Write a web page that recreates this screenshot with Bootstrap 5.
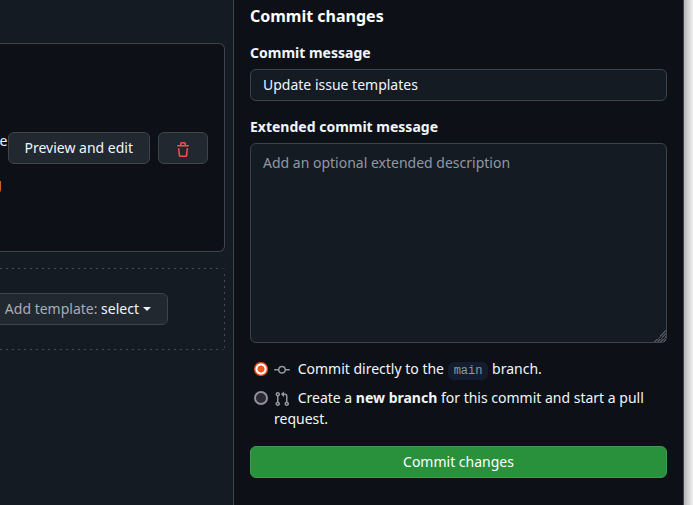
<!DOCTYPE html>
<html lang="en" data-bs-theme="dark">
<head>
<meta charset="utf-8">
<meta name="viewport" content="width=device-width, initial-scale=1">
<title>Commit changes</title>
<link rel="stylesheet" href="https://cdn.jsdelivr.net/npm/bootstrap@5.3.0/dist/css/bootstrap.min.css">
<style>
  body { font-family: "Noto Sans", sans-serif; font-size: 14px; line-height: 21px; color: #f0f6fc; background: #151b23; }
  .layout { display: grid; grid-template-columns: minmax(0, 1fr) minmax(0, 451px) 9px; }
  .templates { padding: 43px 8px 0 0; gap: 16px; }
  .template-box { height: 209px; padding-right: 16px; background: #0d1117; border: 1px solid #3d444d; border-left: 0; border-radius: 0 6px 6px 0; }
  .template-info { gap: 22px; padding-top: 28px; }
  .template-note { color: #ffb757; padding-right: 6px; }
  .add-box {
    height: 82px; padding-right: 57px; border-radius: 0 4px 4px 0;
    background:
      repeating-linear-gradient(90deg, #444b55 0 2px, transparent 2px 6px) top / 100% 1px no-repeat,
      repeating-linear-gradient(90deg, #444b55 0 2px, transparent 2px 6px) bottom / 100% 1px no-repeat,
      repeating-linear-gradient(180deg, #444b55 0 2px, transparent 2px 6px) right / 1px 100% no-repeat;
  }
  .btn { --bs-btn-font-size: 14px; --bs-btn-line-height: 20px; --bs-btn-border-radius: 6px; --bs-btn-padding-y: 5px; --bs-btn-padding-x: 16px; white-space: nowrap; }
  .btn-tool { --bs-btn-color: #f0f6fc; --bs-btn-bg: #212830; --bs-btn-border-color: #3d444d; --bs-btn-hover-color: #f0f6fc; --bs-btn-hover-bg: #262c36; --bs-btn-hover-border-color: #3d444d; }
  .btn-trash { width: 50px; height: 32px; padding-top: 9px; padding-bottom: 5px; color: #fa5049; }
  .btn-commit { --bs-btn-color: #fff; --bs-btn-bg: #29903b; --bs-btn-border-color: #3e9b4f; --bs-btn-hover-color: #fff; --bs-btn-hover-bg: #2e9a40; --bs-btn-hover-border-color: #3e9b4f; }
  .soft { color: #a5adb6; }
  .caret { border: 4px solid transparent; border-top-color: currentColor; border-bottom: 0; }
  .commit-panel { padding: 4px 16px 27px; background: #0d1117; border: solid #3d444d; border-width: 0 1px; }
  .commit-panel h1 { font-size: 16px; line-height: 24px; font-weight: 700; margin-bottom: 14px; }
  .form-label { font-weight: 700; margin-bottom: 6px; }
  .form-control { font-size: 14px; line-height: 20px; padding: 5px 12px; margin-bottom: 15px; color: #f0f6fc; background: #151b23; border-color: #3d444d; border-radius: 6px; }
  textarea.form-control { height: 200px; padding-top: 9px; }
  textarea::-webkit-resizer { background: linear-gradient(135deg, transparent 60%, #4b525b 60% 64%, transparent 64% 70%, #4b525b 70% 74%, transparent 74% 80%, #4b525b 80% 84%, transparent 84% 90%, #4b525b 90% 94%, transparent 94%); }
  .form-control::placeholder { color: #9198a1; }
  .choice { display: grid; grid-template-columns: 16px minmax(0, 1fr); column-gap: 8px; margin-bottom: 7px; }
  .choice-last { margin-bottom: 17px; }
  .choice input { appearance: none; width: 14px; height: 14px; margin: 4px 0 0 4px; border: 2px solid #8f8f9d; border-radius: 50%; background: #2b2a33; }
  .choice input:checked { border: 0; background: radial-gradient(circle, #f05423 3px, #fff 4px 5px, #f05423 6px); }
  .choice svg { margin-right: 4px; color: #9198a1; }
  .branch { font: 12px/18px "Liberation Mono", monospace; color: #9198a1; background: #121d2f; border-radius: 6px; padding: 2px 6px; }
  .page-edge { background: linear-gradient(90deg, #b5b5b5, #f0f0f0); }
</style>
<script src="https://cdn.jsdelivr.net/npm/bootstrap@5.3.0/dist/js/bootstrap.bundle.min.js"></script>
</head>
<body>
<div class="layout min-vh-100">
  <main class="templates d-flex flex-column overflow-hidden">
    <section class="template-box d-flex align-items-center justify-content-end overflow-hidden">
      <div class="template-info d-flex flex-column align-items-end">
        <span>e</span>
        <span class="template-note">g</span>
      </div>
      <div class="d-flex gap-2">
        <button type="button" class="btn btn-tool">Preview and edit</button>
        <button type="button" class="btn btn-tool btn-trash" aria-label="Delete template">
          <svg class="d-block" width="16" height="16" viewBox="0 0 16 16" fill="currentColor" aria-hidden="true"><path d="M11 1.75V3h2.25a.75.75 0 0 1 0 1.5H2.75a.75.75 0 0 1 0-1.5H5V1.75C5 .784 5.784 0 6.75 0h2.5C10.216 0 11 .784 11 1.75ZM4.496 6.675l.66 6.6a.25.25 0 0 0 .249.225h5.19a.25.25 0 0 0 .249-.225l.66-6.6a.75.75 0 0 1 1.492.149l-.66 6.6A1.748 1.748 0 0 1 10.595 15h-5.19a1.75 1.75 0 0 1-1.741-1.575l-.66-6.6a.75.75 0 1 1 1.492-.15ZM6.5 1.75V3h3V1.75a.25.25 0 0 0-.25-.25h-2.5a.25.25 0 0 0-.25.25Z"/></svg>
        </button>
      </div>
    </section>
    <section class="add-box d-flex align-items-center justify-content-end">
      <button type="button" class="btn btn-tool d-flex align-items-center gap-1"><span><span class="soft">Add template:</span> select</span><span class="caret"></span></button>
    </section>
  </main>

  <form class="commit-panel">
    <h1>Commit changes</h1>
    <label class="form-label d-block" for="message">Commit message</label>
    <input class="form-control" id="message" type="text" value="Update issue templates">
    <label class="form-label d-block" for="description">Extended commit message</label>
    <textarea class="form-control" id="description" placeholder="Add an optional extended description"></textarea>
    <div class="choice">
      <input type="radio" name="target" id="direct" checked>
      <label for="direct"><svg width="16" height="16" viewBox="0 0 16 16" fill="currentColor" aria-hidden="true"><path d="M11.93 8.5a4.002 4.002 0 0 1-7.86 0H.75a.75.75 0 0 1 0-1.5h3.32a4.002 4.002 0 0 1 7.86 0h3.32a.75.75 0 0 1 0 1.5Zm-1.43-.75a2.5 2.5 0 1 0-5 0 2.5 2.5 0 0 0 5 0Z"/></svg> Commit directly to the <span class="branch">main</span> branch.</label>
    </div>
    <div class="choice choice-last">
      <input type="radio" name="target" id="pull">
      <label for="pull"><svg width="16" height="16" viewBox="0 0 16 16" fill="currentColor" aria-hidden="true"><path d="M1.5 3.25a2.25 2.25 0 1 1 3 2.122v5.256a2.251 2.251 0 1 1-1.5 0V5.372A2.25 2.25 0 0 1 1.5 3.25Zm5.677-.177L9.573.677A.25.25 0 0 1 10 .854V2.5h1A2.5 2.5 0 0 1 13.5 5v5.628a2.251 2.251 0 1 1-1.5 0V5a1 1 0 0 0-1-1h-1v1.646a.25.25 0 0 1-.427.177L7.177 3.427a.25.25 0 0 1 0-.354ZM3.75 2.5a.75.75 0 1 0 0 1.5.75.75 0 0 0 0-1.5Zm0 9.5a.75.75 0 1 0 0 1.5.75.75 0 0 0 0-1.5Zm8.25.75a.75.75 0 1 0 1.5 0 .75.75 0 0 0-1.5 0Z"/></svg> Create a <strong>new branch</strong> for this commit and start a pull request.</label>
    </div>
    <button type="submit" class="btn btn-commit w-100">Commit changes</button>
  </form>
  <div class="page-edge"></div>
</div>
</body>
</html>
